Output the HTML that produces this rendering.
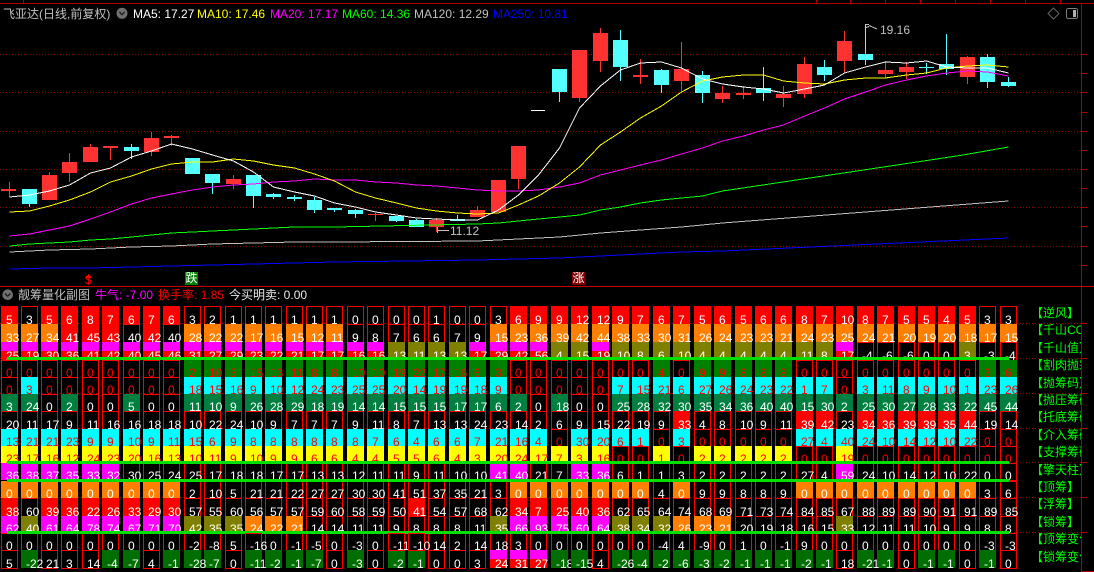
<!DOCTYPE html>
<html lang="zh"><head><meta charset="utf-8"><title>飞亚达</title>
<style>
html,body{margin:0;padding:0;background:#000;width:1094px;height:572px;overflow:hidden}
body{position:relative;font-family:"Liberation Sans","WenQuanYi Zen Hei","Noto Sans CJK SC",sans-serif;font-size:12px;color:#c0c0c0}
svg.bg{position:absolute;left:0;top:0}
.t{position:absolute;white-space:nowrap}
.a{font-size:12px;line-height:14px;top:7px}
.b{font-size:12px;line-height:14px;top:288px}
.b em{font-style:normal}
.r{position:absolute;left:1px;display:grid;grid-auto-rows:100%;grid-template-columns:20px 20px 20px 21px 20px 21px 20px 20px 21px 20px 21px 20px 20px 21px 20px 20px 21px 20px 21px 20px 20px 21px 20px 21px 20px 20px 21px 20px 21px 20px 20px 21px 20px 21px 20px 21px 20px 20px 21px 20px 20px 21px 20px 21px 20px 20px 21px 20px 21px 17px;color:#fff;font-size:12px;white-space:nowrap}
.r.h{height:18px;line-height:28px}
.r.l{height:17px;line-height:26px}
.r.c{color:#f00}
.r p{margin:0 0 -1px;width:17px;padding-left:5px;box-sizing:border-box;box-shadow:inset 0 0 0 1px #f00}
.r p.R,.r p.O,.r p.M,.r p.K,.r p.G,.r p.C,.r p.S,.r p.Y,.r p.D,.r p.X{box-shadow:none;margin-bottom:0}
.R{background:#f00}.O{background:#ff8000}.M{background:#f0f}.K{background:#808000}.G{background:#008000}.C{background:#0ff}.S{background:#008040}.Y{background:#ff0}.D{background:#006e00}
.X{background:linear-gradient(#f0f 50%,#f00 50%)}
.r p.z{position:relative;z-index:1}
.g{position:absolute;left:7px;width:1002px;height:3px;background:#00e000}
.lb{position:absolute;left:1031px;width:50px;overflow:hidden;color:#0f0;white-space:nowrap;font-size:12px;line-height:16px;height:16px}
.mk{position:absolute;top:272px;width:13px;height:13px;line-height:13px;text-align:center;font-size:12px;color:#fff;overflow:hidden}
</style></head><body>
<svg class="bg" width="1094" height="572" viewBox="0 0 1094 572">
<g shape-rendering="crispEdges">
<g stroke="#8c0000" stroke-dasharray="1 2" fill="none">
<path d="M0 54.5H1081M0 92.5H1081M0 131.5H1081M0 169.5H1081M0 207.5H1081M0 246.5H1081M0 323.5H1081M0 358.5H1081M0 393.5H1081M0 428.5H1081M0 462.5H1081M0 497.5H1081M0 532.5H1081"/>
</g>
<g stroke="#b00000" fill="none">
<path d="M0 3.5H1094M23.5 0V3M816.5 0V3M850.5 0V3M885.5 0V3M920.5 0V3M955.5 0V3M990.5 0V3M1025.5 0V3M1060.5 0V3"/>
<path d="M1081.5 3V571M1081 571.5H1094"/>
<path d="M1081 54.5h6M1081 73.5h6M1081 92.5h6M1081 112.5h6M1081 131.5h6M1081 150.5h6M1081 169.5h6M1081 188.5h6M1081 207.5h6M1081 226.5h6M1081 246.5h6M1081 265.5h6M1081 323.5h6M1081 358.5h6M1081 393.5h6M1081 428.5h6M1081 462.5h6M1081 497.5h6M1081 532.5h6"/>
</g>
<path d="M0 286.5H1094" stroke="#c80000" fill="none"/>
<path fill="#ff3232" d="M1 189h15v2h-15zM9 182h1v15h-1zM42 175h15v25h-15zM49 172h1v3h-1zM62 162h15v11h-15zM69 153h1v29h-1zM83 147h15v15h-15zM90 144h1v3h-1zM103 146h15v2h-15zM110 146h1v14h-1zM144 138h15v14h-15zM151 132h1v24h-1zM164 136h15v2h-15zM171 135h1v11h-1zM226 179h15v5h-15zM233 175h1v14h-1zM368 214h15v1h-15zM375 213h1v8h-1zM429 220h15v7h-15zM436 218h1v14h-1zM470 210h15v7h-15zM477 206h1v4h-1zM491 180h15v32h-15zM511 146h15v33h-15zM518 179h1v10h-1zM572 50h15v48h-15zM579 98h1v4h-1zM593 33h15v28h-15zM600 28h1v44h-1zM633 75h15v2h-15zM640 59h1v25h-1zM674 69h15v12h-15zM681 42h1v49h-1zM715 93h15v6h-15zM722 86h1v17h-1zM736 93h15v2h-15zM743 86h1v13h-1zM776 94h15v4h-15zM783 86h1v21h-1zM797 64h15v30h-15zM804 57h1v41h-1zM837 41h15v20h-15zM844 31h1v42h-1zM878 70h15v4h-15zM885 61h1v17h-1zM899 67h15v5h-15zM906 62h1v17h-1zM960 57h15v20h-15zM967 56h1v28h-1z"/>
<path fill="#54ffff" d="M22 189h15v15h-15zM29 204h1v3h-1zM124 147h15v4h-15zM131 144h1v15h-1zM185 158h15v16h-15zM205 174h15v9h-15zM212 183h1v11h-1zM246 175h15v21h-15zM253 196h1v12h-1zM266 194h15v3h-15zM273 193h1v6h-1zM287 197h15v2h-15zM294 195h1v6h-1zM307 200h15v10h-15zM314 197h1v16h-1zM327 208h15v2h-15zM334 210h1v2h-1zM348 210h15v4h-15zM355 209h1v9h-1zM389 216h15v5h-15zM396 221h1v1h-1zM409 220h15v7h-15zM416 219h1v1h-1zM450 219h15v2h-15zM457 215h1v4h-1zM552 69h15v23h-15zM559 92h1v10h-1zM613 40h15v27h-15zM620 30h1v51h-1zM654 70h15v15h-15zM661 69h1v24h-1zM695 75h15v18h-15zM702 71h1v32h-1zM756 88h15v5h-15zM763 67h1v34h-1zM817 67h15v8h-15zM824 60h1v21h-1zM858 54h15v6h-15zM865 24h1v41h-1zM919 67h15v1h-15zM926 63h1v11h-1zM939 64h15v5h-15zM946 34h1v41h-1zM980 57h15v25h-15zM987 54h1v34h-1zM1001 82h15v4h-15zM1008 77h1v10h-1z"/>
<path fill="#fff" d="M531 110h14v1h-14z"/>
<g fill="none" stroke-width="1">
<polyline stroke="#0000ff" points="9.5,269 49.5,268 90.5,268 131.5,267 171.5,266 212.5,265 253.5,264 294.5,263 334.5,262 477.5,260 518.5,259 559.5,258 600.5,256 640.5,254 681.5,252 722.5,251 1008.5,238"/>
<polyline stroke="#c0c0c0" points="9.5,252 49.5,250 90.5,249 131.5,247 171.5,246 212.5,244 253.5,243 294.5,242 334.5,242 477.5,241 518.5,239 559.5,237 600.5,233 640.5,230 681.5,227 722.5,223 1008.5,201"/>
<polyline stroke="#00ff00" points="9.5,246 29.5,244 49.5,243 69.5,242 90.5,240 110.5,239 131.5,237 151.5,235 171.5,233 192.5,232 212.5,231 233.5,230 253.5,229 273.5,228 294.5,227 314.5,227 334.5,227 477.5,224 498.5,223 518.5,221 538.5,219 559.5,217 579.5,215 600.5,210 620.5,207 640.5,203 661.5,200 681.5,198 702.5,196 722.5,191 830,175 897,165 963,155 1008.5,147"/>
<polyline stroke="#ff00ff" points="9.5,236 29.5,234 49.5,230 69.5,226 90.5,219 110.5,212 131.5,204 151.5,198 171.5,194 192.5,190 212.5,187 233.5,185 253.5,184 273.5,182 294.5,181 314.5,179 334.5,180 355.5,180 375.5,182 396.5,183 416.5,185 436.5,186 457.5,188 477.5,190 498.5,191 518.5,191 538.5,190 559.5,187 579.5,183 600.5,175 620.5,170 640.5,165 661.5,160 681.5,154 702.5,148 722.5,141 743.5,136 763.5,130 783.5,125 804.5,116 824.5,108 844.5,99 865.5,92 885.5,85 906.5,80 926.5,76 946.5,73 967.5,71 987.5,72 1008.5,76"/>
<polyline stroke="#ffff00" points="9.5,212 29.5,211 49.5,206 69.5,200 90.5,192 110.5,182 131.5,176 151.5,169 171.5,164 192.5,162 212.5,162 233.5,159 253.5,161 273.5,165 294.5,168 314.5,174 334.5,181 355.5,192 375.5,198 396.5,203 416.5,208 436.5,211 457.5,213 477.5,214 498.5,213 518.5,205 538.5,196 559.5,183 579.5,167 600.5,145 620.5,132 640.5,118 661.5,106 681.5,92 702.5,81 722.5,77 743.5,75 763.5,75 783.5,81 804.5,83 824.5,84 844.5,80 865.5,78 885.5,78 906.5,75 926.5,73 946.5,68 967.5,66 987.5,65 1008.5,67"/>
<polyline stroke="#ffffff" points="9.5,197 29.5,195 49.5,191 69.5,185 90.5,173 110.5,168 131.5,157 151.5,151 171.5,144 192.5,149 212.5,155 233.5,161 253.5,172 273.5,187 294.5,192 314.5,196 334.5,203 355.5,207 375.5,212 396.5,215 416.5,218 436.5,219 457.5,220 477.5,220 498.5,210 518.5,195 538.5,175 559.5,148 579.5,108 600.5,86 620.5,70 640.5,63 661.5,62 681.5,68 702.5,79 722.5,84 743.5,87 763.5,89 783.5,93 804.5,89 824.5,85 844.5,73 865.5,67 885.5,62 906.5,63 926.5,61 946.5,67 967.5,68 987.5,68 1008.5,73"/>
</g>
<path stroke="#c0c0c0" fill="none" d="M449 230.5H437M437.5 227V233M866 24.5h3M866 27.5l3,-1M869 25.5L877 29"/>
<rect x="1066.5" y="8.5" width="11" height="10" rx="2" fill="none" stroke="#808080"/>
<rect x="1073" y="10" width="3" height="7" fill="#b0b0b0"/>
</g>
<path d="M1053.5 8L1059 13.5L1053.5 19L1048 13.5Z" fill="none" stroke="#666"/>
<circle cx="122" cy="13.3" r="5.5" fill="#707070"/>
<path d="M119.3 12l2.7 2.7l2.7-2.7" fill="none" stroke="#1a1a1a" stroke-width="1.3"/>
<circle cx="7.7" cy="294.7" r="5.3" fill="#707070"/>
<path d="M5 293.5l2.7 2.7l2.7-2.7" fill="none" stroke="#1a1a1a" stroke-width="1.3"/>
<path d="M88.7 274l3 4h-6z" fill="#f00"/>
</svg>

<div class="t" style="left:3px;top:7px;font-size:12px;line-height:14px">飞亚达(日线,前复权)</div>
<div class="t a" style="left:133px;color:#fff">MA5: 17.27</div>
<div class="t a" style="left:197px;color:#ff0">MA10: 17.46</div>
<div class="t a" style="left:270px;color:#f0f">MA20: 17.17</div>
<div class="t a" style="left:342px;color:#0f0">MA60: 14.36</div>
<div class="t a" style="left:414px;color:#c0c0c0">MA120: 12.29</div>
<div class="t a" style="left:493px;color:#00f">MA250: 10.81</div>
<div class="t" style="left:450px;top:224px;font-size:12px;line-height:14px">11.12</div>
<div class="t" style="left:880px;top:23px;font-size:12px;line-height:14px">19.16</div>
<div class="t" style="left:85px;top:275px;font-size:12px;line-height:11px;color:#f00">$</div>
<div class="mk" style="left:185px;background:#008000">跌</div>
<div class="mk" style="left:572px;background:#800000">涨</div>

<div class="t b" style="left:18px">靓筹量化副图</div>
<div class="t b" style="left:95px;color:#f0f">牛气<em>: -7.00</em></div>
<div class="t b" style="left:158px;color:#f00">换手率<em>: 1.85</em></div>
<div class="t b" style="left:229px;color:#e8e8e8">今买明卖<em>: 0.00</em></div>

<div class="r h" style="top:306px"><p class=R>5<p>3<p class=R>5<p class=R>6<p class=R>8<p class=R>7<p class=R>6<p class=R>7<p class=R>6<p>3<p>2<p>1<p>1<p>1<p>1<p>1<p>1<p>0<p>0<p>0<p>0<p>1<p>0<p>0<p>3<p class=R>6<p class=R>9<p class=R>9<p class=R>12<p class=R>12<p class=R>9<p class=R>7<p class=R>6<p class=R>7<p class=R>5<p class=R>6<p class=R>5<p class=R>6<p class=R>6<p class=R>8<p class=R>7<p class=R>10<p class=R>8<p class=R>7<p class=R>5<p class=R>5<p class=R>4<p class=R>5<p>3<p>3</div>
<div class="r h" style="top:324px"><p class=O>33<p class=O>27<p class=O>34<p class=R>41<p class=R>45<p class=R>43<p>40<p class=R>42<p>40<p class=O>28<p class=O>22<p class=O>22<p class=O>17<p class=O>16<p class=O>15<p class=O>12<p class=O>11<p>9<p>8<p>7<p>6<p>6<p>7<p>9<p class=O>15<p class=O>23<p class=O>36<p class=O>39<p class=O>42<p class=O>44<p class=O>38<p class=O>33<p class=O>30<p class=O>31<p class=O>26<p class=O>24<p class=O>23<p class=O>23<p class=O>21<p class=O>24<p class=O>23<p class=O>25<p class=O>24<p class=O>21<p class=O>20<p class=O>19<p class=O>20<p class=O>18<p class=O>17<p class=O>15</div>
<div class="r h" style="top:342px"><p class=X>25<p class=X>19<p class=X>30<p class=X>36<p class=X>41<p class=X>42<p class=X>40<p class=X>45<p class=X>46<p class=X>31<p class=X>27<p class=X>29<p class=X>23<p class=X>22<p class=X>21<p class=X>17<p class=X>17<p class=X>16<p class=X>16<p class=K>13<p class=K>11<p class=K>13<p class=K>13<p class=X>17<p class=X>29<p class=X>42<p class=X>56<p class=K>4<p class=K>15<p class=X>19<p class=K>10<p class=K>8<p class=K>6<p class=K>10<p class=K>4<p class=K>4<p class=K>4<p class=K>4<p class=K>4<p class=K>11<p class=K>8<p class=X>17<p>-4<p>-6<p>-6<p>0<p>0<p class=K>3<p>-3<p>-4</div>
<div class="r l c" style="top:360px"><p>0<p>0<p>0<p>0<p>0<p>0<p>0<p>0<p>0<p class=G>2<p class=G>10<p class=G>5<p class=G>15<p class=G>13<p class=G>11<p class=G>8<p class=G>8<p class=G>10<p class=G>10<p class=G>19<p class=G>22<p class=G>17<p class=G>16<p class=G>6<p class=G>3<p>0<p>0<p>0<p>0<p>0<p>0<p>0<p class=G>4<p>0<p class=G>9<p class=G>9<p class=G>8<p class=G>8<p class=G>8<p>0<p>0<p>0<p>0<p>0<p>0<p>0<p>0<p>0<p class=G>3<p class=G>6</div>
<div class="r l c" style="top:377px"><p>0<p class=C>3<p>0<p>0<p>0<p>0<p>0<p>0<p>0<p class=C>18<p class=C>15<p class=C>16<p class=C>9<p class=C>10<p class=C>12<p class=C>24<p class=C>23<p class=C>25<p class=C>25<p class=C>20<p class=C>14<p class=C>19<p class=C>19<p class=C>18<p class=C>9<p>0<p>0<p>0<p>0<p>0<p class=C>7<p class=C>15<p class=C>21<p class=C>6<p class=C>27<p class=C>26<p class=C>24<p class=C>23<p class=C>22<p class=C>1<p class=C>7<p>0<p class=C>3<p class=C>11<p class=C>8<p class=C>9<p class=C>10<p class=C>1<p class=C>23<p class=C>26</div>
<div class="r l" style="top:394px"><p class=S>3<p class=S>24<p>0<p class=S>2<p>0<p>0<p class=S>5<p>0<p>0<p class=S>11<p class=S>10<p class=S>9<p class=S>26<p class=S>28<p class=S>29<p class=S>18<p class=S>19<p class=S>14<p class=S>14<p class=S>15<p class=S>15<p class=S>15<p class=S>17<p class=S>17<p class=S>6<p class=S>2<p>0<p class=S>18<p>0<p>0<p class=S>25<p class=S>28<p class=S>32<p class=S>30<p class=S>35<p class=S>34<p class=S>36<p class=S>40<p class=S>40<p class=S>15<p class=S>30<p class=S>2<p class=S>25<p class=S>30<p class=S>27<p class=S>28<p class=S>33<p class=S>22<p class=S>45<p class=S>44</div>
<div class="r h" style="top:411px"><p>20<p>11<p>17<p>9<p>11<p>16<p>16<p>18<p>18<p>10<p>22<p>24<p>10<p>9<p>7<p>7<p>7<p>9<p>11<p>8<p>7<p>13<p>13<p>24<p>23<p>14<p>2<p>6<p>9<p>15<p>22<p>19<p>9<p class=R>33<p>4<p>8<p>10<p>9<p>11<p class=R>39<p class=R>42<p>23<p class=R>34<p class=R>36<p class=R>39<p class=R>39<p class=R>35<p class=R>44<p>19<p>14</div>
<div class="r l c" style="top:429px"><p class=C>13<p class=C>21<p class=C>21<p class=C>23<p class=C>9<p class=C>9<p class=C>10<p class=C>9<p class=C>11<p class=C>15<p class=C>6<p class=C>9<p class=C>8<p class=C>8<p class=C>8<p class=C>8<p class=C>8<p class=C>8<p class=C>7<p class=C>6<p class=C>4<p class=C>6<p class=C>6<p class=C>7<p class=C>21<p class=C>16<p class=C>4<p>0<p class=C>30<p class=C>20<p class=C>6<p class=C>1<p>0<p class=C>3<p>0<p>0<p>0<p>0<p>0<p class=C>27<p class=C>4<p class=C>40<p class=C>24<p class=C>10<p class=C>14<p class=C>12<p class=C>10<p class=C>22<p>0<p>0</div>
<div class="r l c" style="top:446px"><p class=Y>23<p class=Y>17<p class=Y>16<p class=Y>12<p class=Y>24<p class=Y>23<p class=Y>20<p class=Y>16<p class=Y>13<p class=Y>10<p class=Y>11<p class=Y>9<p class=Y>10<p class=Y>9<p class=Y>9<p class=Y>6<p class=Y>6<p class=Y>4<p class=Y>4<p class=Y>5<p class=Y>5<p class=Y>6<p class=Y>4<p class=Y>3<p class=Y>20<p class=Y>24<p class=Y>17<p class=Y>7<p class=Y>3<p class=Y>16<p>0<p>0<p class=Y>1<p>0<p class=Y>2<p class=Y>2<p class=Y>2<p class=Y>2<p class=Y>2<p>0<p>0<p class=Y>19<p>0<p>0<p>0<p>0<p>0<p>0<p>0<p>0</div>
<div class="r l" style="top:463px"><p class=M>36<p class=M>38<p class=M>37<p class=M>35<p class=M>33<p class=M>32<p>30<p>25<p>24<p>25<p>17<p>18<p>18<p>17<p>17<p>13<p>13<p>12<p>11<p>11<p>9<p>11<p>10<p>10<p class=M>41<p class=M>40<p>21<p>7<p class=M>33<p class=M>36<p>6<p>1<p>1<p>3<p>2<p>2<p>2<p>2<p>2<p>27<p>4<p class=M>59<p>24<p>10<p>14<p>12<p>10<p>22<p>0<p>0</div>
<div class="r l" style="top:481px"><p class=O>0<p class=O>0<p class=O>0<p class=O>0<p class=O>0<p class=O>0<p class=O>0<p class=O>0<p class=O>0<p>2<p>10<p>5<p>21<p>21<p>22<p>27<p>27<p>30<p>30<p>41<p>51<p>37<p>35<p>21<p>3<p class=O>0<p class=O>0<p class=O>0<p class=O>0<p class=O>0<p class=O>0<p class=O>0<p>4<p class=O>0<p>9<p>9<p>8<p>8<p>9<p class=O>0<p class=O>0<p class=O>0<p class=O>0<p class=O>0<p class=O>0<p class=O>0<p class=O>0<p class=O>0<p>3<p>6</div>
<div class="r h" style="top:498px"><p class=R>38<p>60<p class=R>39<p class=R>36<p class=R>22<p class=R>26<p class=R>33<p class=R>29<p class=R>30<p>57<p>55<p>60<p>56<p>57<p>57<p>59<p>60<p>58<p>59<p>50<p class=R>41<p>54<p>57<p>68<p>62<p class=R>34<p class=R>7<p class=R>25<p class=R>40<p class=R>36<p>62<p>65<p>64<p>74<p>68<p>69<p>71<p>73<p>74<p>84<p>85<p>67<p>88<p>89<p>89<p>90<p>91<p>91<p>89<p>85</div>
<div class="r l" style="top:516px"><p class=M>62<p class=K>40<p class=M>61<p class=M>64<p class=M>78<p class=M>74<p class=M>67<p class=M>71<p class=M>70<p class=K>42<p class=K>35<p class=K>35<p class=O>24<p class=O>22<p class=O>21<p>14<p>14<p>11<p>11<p>9<p>8<p>8<p>8<p>11<p class=K>35<p class=M>66<p class=M>93<p class=M>75<p class=M>60<p class=M>64<p class=K>38<p class=K>34<p class=K>32<p class=O>26<p class=O>23<p class=O>21<p>20<p>19<p>18<p>16<p>15<p class=K>33<p>12<p>11<p>11<p>10<p>9<p>9<p>8<p>8</div>
<div class="r l" style="top:533px"><p>0<p>0<p>0<p>0<p>0<p>0<p>0<p>0<p>0<p>-2<p>-8<p>5<p class=z>-16<p>0<p>-1<p>-5<p>0<p>-3<p>0<p class=z>-11<p class=z>-10<p>14<p>2<p>14<p>18<p>3<p>0<p>0<p>0<p>0<p>0<p>0<p>-4<p>4<p>-9<p>0<p>1<p>0<p>-1<p>9<p>0<p>0<p>0<p>0<p>0<p>0<p>0<p>0<p>-3<p>-3</div>
<div class="r h" style="top:550px"><p>5<p class="D z">-22<p>21<p>3<p>14<p class=D>-4<p class=D>-7<p>4<p class=D>-1<p class="D z">-28<p class=D>-7<p>0<p class="D z">-11<p class=D>-2<p class=D>-1<p class=D>-7<p>0<p class=D>-3<p>0<p class=D>-2<p class=D>-1<p>0<p>0<p>3<p class=X>24<p class=X>31<p class=X>27<p class="D z">-18<p class="D z">-15<p>4<p class="D z">-26<p class=D>-4<p class=D>-2<p class=D>-6<p class=D>-3<p class=D>-2<p class=D>-1<p class=D>-1<p class=D>-1<p class=D>-2<p class=D>-1<p>18<p class="D z">-21<p class=D>-1<p>0<p class=D>-1<p class=D>-1<p>0<p class=D>-1<p>0</div>

<div class="g" style="top:357px"></div>
<div class="g" style="top:461px"></div>
<div class="g" style="top:479px"></div>
<div class="g" style="top:531px"></div>

<div class="lb" style="top:305px">【逆风】</div>
<div class="lb" style="top:322px">【千山COST】</div>
<div class="lb" style="top:340px">【千山值】</div>
<div class="lb" style="top:357px">【割肉抛筹】</div>
<div class="lb" style="top:375px">【抛筹码】</div>
<div class="lb" style="top:392px">【抛压筹码】</div>
<div class="lb" style="top:409px">【托底筹码】</div>
<div class="lb" style="top:427px">【介入筹码】</div>
<div class="lb" style="top:444px">【支撑筹码】</div>
<div class="lb" style="top:462px">【擎天柱】</div>
<div class="lb" style="top:479px">【顶筹】</div>
<div class="lb" style="top:496px">【浮筹】</div>
<div class="lb" style="top:514px">【锁筹】</div>
<div class="lb" style="top:531px">【顶筹变化】</div>
<div class="lb" style="top:549px">【锁筹变化】</div>
</body></html>
